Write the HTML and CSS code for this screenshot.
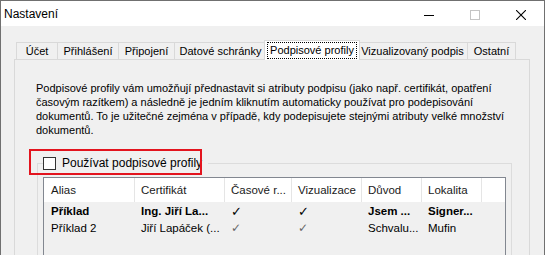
FILE: index.html
```html
<!DOCTYPE html>
<html lang="cs">
<head>
<meta charset="utf-8">
<title>Nastavení</title>
<link rel="stylesheet" href="styles.css">
</head>
<body>
<div class="window">
  <div class="titlebar">
    <div class="title">Nastavení</div>
    <div class="ctl">
      <svg width="10" height="10" viewBox="0 0 10 10"><line x1="0" y1="5.5" x2="10" y2="5.5" stroke="#000" stroke-width="1"/></svg>
    </div>
    <div class="ctl">
      <svg width="10" height="10" viewBox="0 0 10 10"><rect x="0.5" y="0.5" width="9" height="9" fill="none" stroke="#c4c4c4" stroke-width="1"/></svg>
    </div>
    <div class="ctl">
      <svg width="10" height="10" viewBox="0 0 10 10"><path d="M0 0 L10 10 M10 0 L0 10" stroke="#000" stroke-width="1.1"/></svg>
    </div>
  </div>
  <div class="client">
    <div class="tabs">
      <div class="tab tab-ucet">Účet</div>
      <div class="tab tab-prihlaseni">Přihlášení</div>
      <div class="tab tab-pripojeni">Připojení</div>
      <div class="tab tab-datove">Datové schránky</div>
      <div class="tab tab-active"><span class="focus">Podpisové profily</span></div>
      <div class="tab tab-vizual">Vizualizovaný podpis</div>
      <div class="tab tab-ostatni">Ostatní</div>
    </div>
    <div class="panel">
      <p class="desc">Podpisové profily vám umožňují přednastavit si atributy podpisu (jako např. certifikát, opatření<br>časovým razítkem) a následně je jedním kliknutím automaticky používat pro podepisování<br>dokumentů. To je užitečné zejména v případě, kdy podepisujete stejnými atributy velké množství<br>dokumentů.</p>
      <fieldset class="group">
        <legend class="group-legend"><span class="checkbox"></span><span class="check-label">Používat podpisové profily</span></legend>
        <div class="listview">
          <div class="lv-header">
            <div class="hcell first">Alias</div>
            <div class="hcell">Certifikát</div>
            <div class="hcell">Časové r...</div>
            <div class="hcell">Vizualizace</div>
            <div class="hcell">Důvod</div>
            <div class="hcell">Lokalita</div>
            <div class="hcell last"></div>
          </div>
          <div class="lv-body">
            <div class="lv-row bold">
              <div class="cell first">Příklad</div>
              <div class="cell">Ing. Jiří La...</div>
              <div class="cell mark">✓</div>
              <div class="cell mark">✓</div>
              <div class="cell">Jsem ...</div>
              <div class="cell">Signer...</div>
              <div class="cell"></div>
            </div>
            <div class="lv-row">
              <div class="cell first">Příklad 2</div>
              <div class="cell">Jiří Lapáček (...</div>
              <div class="cell mark light">✓</div>
              <div class="cell mark light">✓</div>
              <div class="cell">Schvalu...</div>
              <div class="cell">Mufin</div>
              <div class="cell"></div>
            </div>
          </div>
        </div>
      </fieldset>
    </div>
  </div>
  <div class="highlight"></div>
</div>
</body>
</html>
```
FILE: styles.css
```css
html, body {
  margin: 0;
  padding: 0;
}
body {
  width: 545px;
  height: 255px;
  overflow: hidden;
  background: #f0f0f0;
  font-family: "Liberation Sans", Arial, sans-serif;
  color: #000;
}
.window {
  position: relative;
  box-sizing: border-box;
  width: 545px;
  height: 255px;
  border: 1px solid #707070;
  border-bottom: none;
  background: #f0f0f0;
  overflow: hidden;
}
.titlebar {
  height: 25px;
  background: #fff;
  display: flex;
  align-items: center;
}
.title {
  flex: 1;
  padding-left: 3px;
  font-size: 12px;
}
.ctl {
  width: 46px;
  height: 25px;
  display: flex;
  justify-content: center;
  align-items: center;
}
.ctl svg {
  display: block;
  margin-top: 2px;
}
.client {
  padding: 14px 0 0 13px;
}
.tabs {
  display: flex;
  align-items: flex-end;
  height: 19px;
  padding-left: 2px;
}
.tab {
  box-sizing: border-box;
  height: 17px;
  border: 1px solid #d9d9d9;
  border-bottom: none;
  background: #f0f0f0;
  margin-left: -1px;
  font-size: 11px;
  line-height: 16px;
  text-align: center;
  white-space: nowrap;
}
.tab-ucet { width: 42px; margin-left: 0; }
.tab-prihlaseni { width: 62px; }
.tab-pripojeni { width: 57px; }
.tab-datove { width: 93px; }
.tab-active {
  position: relative;
  z-index: 1;
  width: 96px;
  height: 20px;
  margin-left: -3px;
  margin-bottom: -1px;
  background: #fff;
  padding-top: 1px;
}
.tab-vizual { width: 111px; margin-left: -3px; }
.tab-ostatni { width: 49px; }
.focus {
  display: inline-block;
  border: 1px dotted #000;
  padding: 0 2px;
  line-height: 15px;
}
.panel {
  box-sizing: border-box;
  width: 516px;
  height: 260px;
  border: 1px solid #d9d9d9;
  padding: 21px 0 0 21px;
}
.desc {
  margin: 0;
  font-size: 11px;
  line-height: 14px;
  white-space: nowrap;
}
.group {
  box-sizing: border-box;
  width: 475px;
  margin: 20px 0 0 1px;
  padding: 0 5px;
  border: 1px solid #dcdcdc;
  min-width: 0;
}
.group-legend {
  display: flex;
  align-items: center;
  height: 13px;
  padding: 0 6px 0 0;
}
.checkbox {
  box-sizing: border-box;
  width: 13px;
  height: 13px;
  border: 1px solid #333;
  background: #fff;
  margin-right: 6px;
}
.check-label {
  font-size: 12px;
  line-height: 13px;
  white-space: nowrap;
}
.listview {
  margin-top: 7px;
  height: 80px;
  border: 1px solid #828790;
  background: #f0f0f0;
}
.lv-header,
.lv-row {
  display: grid;
  grid-template-columns: 91px 90px 67px 70px 60px 60px 1fr;
}
.lv-header {
  height: 24px;
  background: #fff;
}
.hcell {
  box-sizing: border-box;
  border-right: 1px solid #e5e5e5;
  padding-left: 6px;
  font-size: 11.5px;
  line-height: 24px;
  color: #1a1a1a;
  white-space: nowrap;
  overflow: hidden;
}
.hcell.first { padding-left: 7px; }
.hcell.last { border-right: none; }
.lv-body {
  padding-top: 1px;
}
.lv-row {
  height: 17px;
}
.cell {
  padding-left: 6px;
  font-size: 11.5px;
  line-height: 17px;
  white-space: nowrap;
  overflow: hidden;
}
.cell.first { padding-left: 7px; }
.lv-row.bold .cell { font-weight: bold; }
.mark {
  font-family: "DejaVu Sans", sans-serif;
  font-size: 13px;
}
.lv-row.bold .mark { font-weight: bold; }
.mark.light { color: #666; font-weight: normal; font-size: 12px; }
.highlight {
  position: absolute;
  left: 28px;
  top: 148px;
  width: 173px;
  height: 26px;
  box-sizing: border-box;
  border: 2px solid #e3141e;
}
```
